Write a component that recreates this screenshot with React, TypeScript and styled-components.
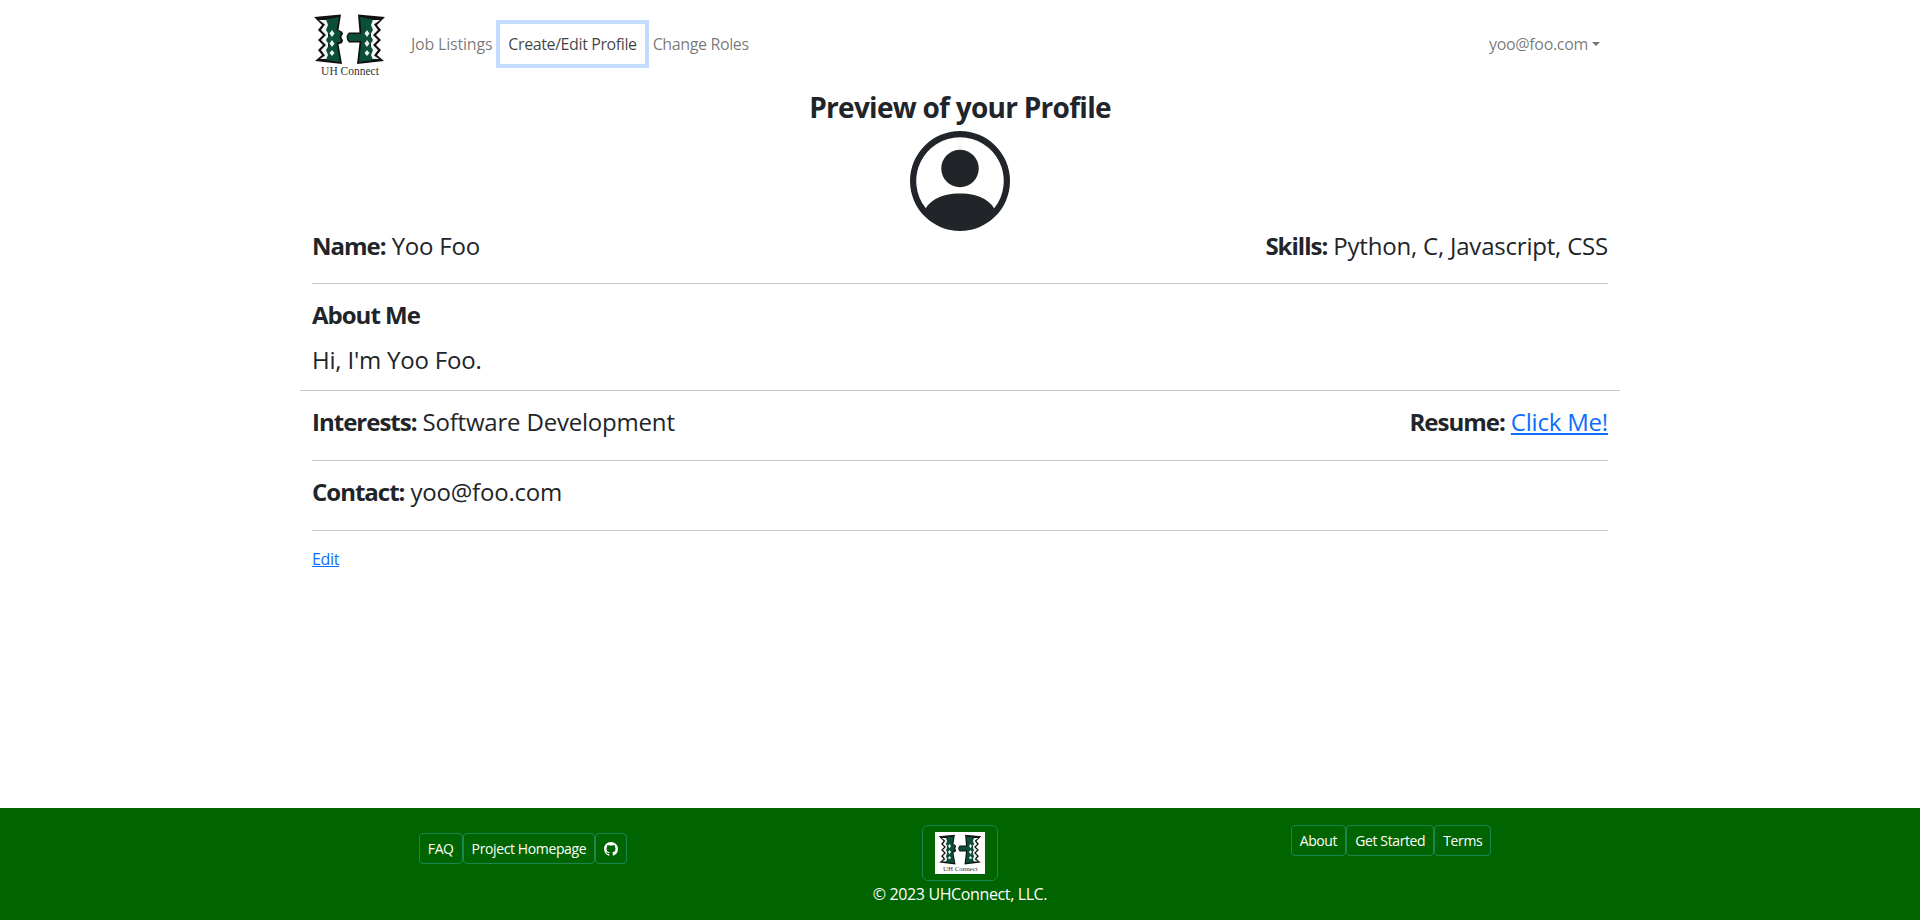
import React from "react";
import styled, { createGlobalStyle } from "styled-components";
import { BsPersonCircle, BsGithub } from "react-icons/bs";

const GlobalStyle = createGlobalStyle`
  * { box-sizing: border-box; }
  html, body { margin: 0; height: 100%; overflow: hidden; }
  body {
    font-family: "Open Sans", "Liberation Sans", sans-serif;
    font-size: 16px;
    line-height: 1.5;
    color: #212529;
    background: #fff;
    letter-spacing: -0.32px;
  }
`;

const Page = styled.div`
  display: flex;
  flex-direction: column;
  height: 920px;
  overflow: hidden;
`;

const Main = styled.main`
  flex: 1;
`;

const Container = styled.div`
  width: 1320px;
  margin: 0 auto;
  padding: 0 12px;
`;

const NavBar = styled.nav`
  display: flex;
  align-items: center;
  height: 88px;
  margin-bottom: 3px;
`;

const Brand = styled.a`
  display: block;
  width: 75px;
  height: 70px;
  margin-right: 16px;
  margin-top: 1px;
`;

const NavLinks = styled.div`
  display: flex;
  flex: 1;
`;

const NavLink = styled.a<{ $focused?: boolean; $track?: number }>`
  display: block;
  padding: 8px;
  letter-spacing: ${(p) => p.$track ?? -0.32}px;
  color: ${(p) => (p.$focused ? "rgba(0,0,0,.75)" : "rgba(0,0,0,.55)")};
  box-shadow: ${(p) => (p.$focused ? "0 0 0 4px rgba(13,110,253,.25)" : "none")};
`;

const UserMenu = styled.a`
  display: flex;
  align-items: center;
  padding: 8px;
  color: rgba(0, 0, 0, 0.55);
  &::after {
    content: "";
    margin-left: 4px;
    border-top: 4.8px solid;
    border-right: 4.8px solid transparent;
    border-left: 4.8px solid transparent;
  }
`;

const Title = styled.h3`
  margin: 0;
  font-size: 28px;
  font-weight: 700;
  line-height: 1.2;
  letter-spacing: -0.73px;
  text-align: center;
`;

const AvatarWrap = styled.div`
  display: flex;
  justify-content: center;
  margin-top: 6px;
  height: 100px;
  font-size: 100px;
  line-height: 0;
`;

const Row = styled.div`
  display: flex;
  justify-content: space-between;
`;

const FieldText = styled.div<{ $after?: number }>`
  padding-top: 1px;
  font-size: 24px;
  line-height: 1.2;
  font-weight: 400;
  letter-spacing: -0.2px;
  margin-bottom: ${(p) => p.$after ?? 7}px;
`;

const Strong = styled.span`
  font-weight: 700;
  letter-spacing: -1px;
`;

const Rule = styled.hr<{ $wide?: boolean }>`
  border: 0;
  border-top: 1px solid #c7c8c9;
  margin: ${(p) => (p.$wide ? "16px -12px" : "16px 0")};
`;

const ResumeLink = styled.a`
  color: #0d6efd;
  text-decoration: underline;
`;

const EditLink = styled.a`
  color: #0d6efd;
  text-decoration: underline;
`;

const Footer = styled.footer`
  flex: none;
  height: 112px;
  background: #006400;
  color: #fff;
`;

const FooterGrid = styled.div`
  width: 1320px;
  margin: 0 auto;
  display: grid;
  grid-template-columns: 446px 1fr 446px;
  padding-top: 17px;
`;

const FooterColumn = styled.div<{ $top?: number; $shift?: number }>`
  display: flex;
  flex-direction: column;
  align-items: center;
  padding-top: ${(p) => p.$top ?? 0}px;
  transform: translateX(${(p) => p.$shift ?? 0}px);
`;

const ButtonGroup = styled.div`
  display: flex;
`;

const FooterButton = styled.a`
  display: flex;
  align-items: center;
  height: 31px;
  padding: 0 8px;
  border: 1px solid #198754;
  border-radius: 4px;
  font-size: 14px;
  letter-spacing: -0.38px;
  color: #fff;
`;

const LogoButton = styled.a`
  display: block;
  padding: 6px 12px;
  border: 1px solid #198754;
  border-radius: 6px;
  line-height: 0;
`;

const LogoTile = styled.div`
  width: 50px;
  height: 42px;
  background: #fff;
`;

const Copyright = styled.div`
  margin-top: 1px;
  line-height: 24px;
  letter-spacing: -0.38px;
`;

function Logo() {
  return (
    <svg width="100%" height="100%" viewBox="0 0 75 70">
      <path
        d="M2 7 L29 4.5 L26.5 20 Q31 21 31 24 Q28 27 31 30 Q31 34 26.5 34 L30 54 L3 51 L10 45 L6 40 L11 35 L6 30 L11 25 L6 20 L10 15 Z"
        fill="#111"
      />
      <path
        d="M46 4.5 L73 7 L65 15 L69 20 L64 25 L69 30 L64 35 L69 40 L65 45 L72 51 L45 54 L47.5 32.5 L37 32.5 Q32 27 37 22.5 L47.5 22.5 Z"
        fill="#111"
      />
      <path
        d="M7 10 L13 14.5 L9 20 L14 25 L9 30 L14 35 L9 40 L13 45.5 L8 49 L16 49 L16 10 Z M68 10 L62 14.5 L66 20 L61 25 L66 30 L61 35 L66 40 L62 45.5 L67 49 L59 49 L59 10 Z"
        fill="#f4f4f4"
      />
      <path
        d="M14 9.5 L27 7 L24.5 20 Q29 21 29 24 Q26 27 29 30 Q29 32.5 24.5 32.5 L28 52 L14 50 L16 45 L14 40 L17 35 L14 30 L17 25 L14 20 L16 15 Z"
        fill="#0b4f36"
      />
      <path
        d="M48 7 L61 9.5 L59 15 L61 20 L58 25 L61 30 L58 35 L61 40 L59 45 L61 50 L47 52 L49.5 31 L37.5 31 Q34 27 37.5 24 L49.5 24 Z"
        fill="#0b4f36"
      />
      <path
        d="M20 20l2.5 3.5-2.5 3.5-2.5-3.5z M20 30l2.5 3.5-2.5 3.5-2.5-3.5z M20 40l2.5 3-2.5 3-2.5-3z M55 20l2.5 3.5-2.5 3.5-2.5-3.5z M55 30l2.5 3.5-2.5 3.5-2.5-3.5z M55 40l2.5 3-2.5 3-2.5-3z"
        fill="#e8f0ec"
      />
      <text
        x="38"
        y="65"
        textAnchor="middle"
        fontFamily='"Liberation Serif", serif'
        fontSize="11.5"
        letterSpacing="0"
        fill="#333"
      >
        UH Connect
      </text>
    </svg>
  );
}

export default function App() {
  return (
    <Page>
      <GlobalStyle />
      <Main>
        <Container>
          <NavBar>
            <Brand>
              <Logo />
            </Brand>
            <NavLinks>
              <NavLink $track={-0.2}>Job Listings</NavLink>
              <NavLink $focused $track={-0.4}>
                Create/Edit Profile
              </NavLink>
              <NavLink $track={-0.38}>Change Roles</NavLink>
            </NavLinks>
            <UserMenu>yoo@foo.com</UserMenu>
          </NavBar>
          <Title>Preview of your Profile</Title>
          <AvatarWrap>
            <BsPersonCircle />
          </AvatarWrap>
          <Row>
            <FieldText>
              <Strong>Name:</Strong> Yoo Foo
            </FieldText>
            <FieldText>
              <Strong>Skills:</Strong> Python, C, Javascript, CSS
            </FieldText>
          </Row>
          <Rule />
          <FieldText $after={15}>
            <Strong>About Me</Strong>
          </FieldText>
          <FieldText $after={-1}>Hi, I'm Yoo Foo.</FieldText>
          <Rule $wide />
          <Row>
            <FieldText>
              <Strong>Interests:</Strong> Software Development
            </FieldText>
            <FieldText>
              <Strong>Resume:</Strong> <ResumeLink>Click Me!</ResumeLink>
            </FieldText>
          </Row>
          <Rule />
          <Row>
            <FieldText>
              <Strong>Contact:</Strong> yoo@foo.com
            </FieldText>
          </Row>
          <Rule />
          <EditLink>Edit</EditLink>
        </Container>
      </Main>
      <Footer>
        <FooterGrid>
          <FooterColumn $top={8}>
            <ButtonGroup>
              <FooterButton>FAQ</FooterButton>
              <FooterButton>Project Homepage</FooterButton>
              <FooterButton>
                <BsGithub />
              </FooterButton>
            </ButtonGroup>
          </FooterColumn>
          <FooterColumn>
            <LogoButton>
              <LogoTile>
                <Logo />
              </LogoTile>
            </LogoButton>
            <Copyright>© 2023 UHConnect, LLC.</Copyright>
          </FooterColumn>
          <FooterColumn $shift={-6}>
            <ButtonGroup>
              <FooterButton>About</FooterButton>
              <FooterButton>Get Started</FooterButton>
              <FooterButton>Terms</FooterButton>
            </ButtonGroup>
          </FooterColumn>
        </FooterGrid>
      </Footer>
    </Page>
  );
}
